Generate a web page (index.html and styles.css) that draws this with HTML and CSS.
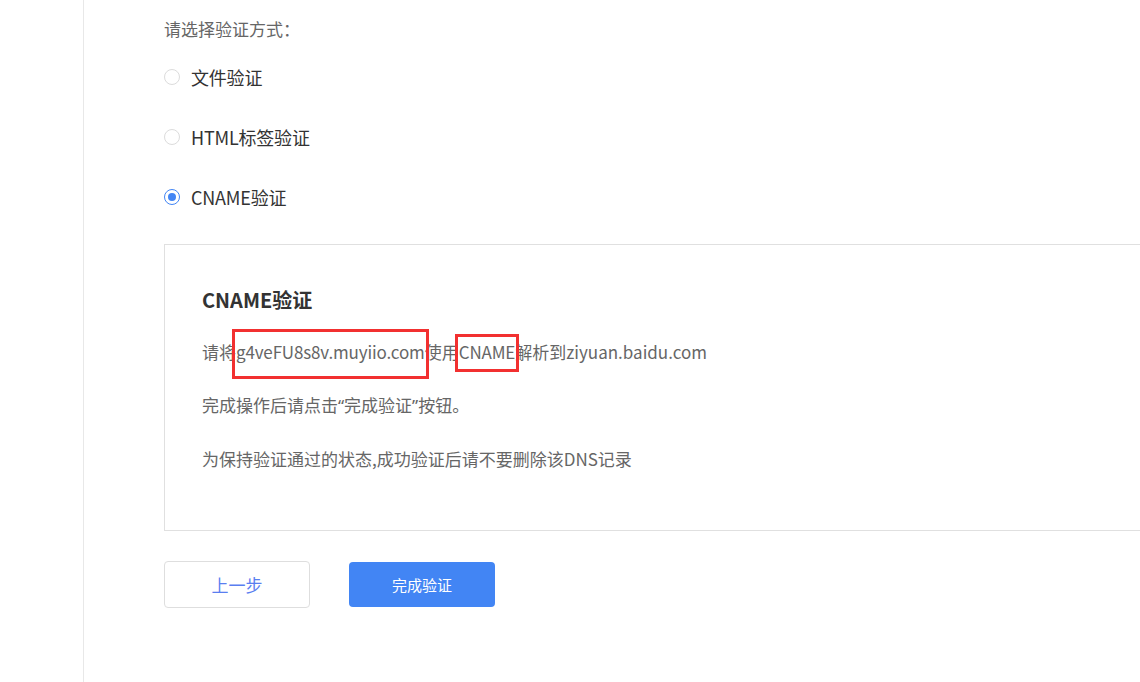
FILE: index.html
```html
<!DOCTYPE html>
<html lang="zh-CN">
<head>
<meta charset="utf-8">
<title>CNAME验证</title>
<link rel="stylesheet" href="styles.css">
</head>
<body>
<div class="page">
  <div class="main">
    <div class="prompt">请选择验证方式：</div>
    <div class="options">
      <label class="option"><span class="radio"></span><span class="opt-text">文件验证</span></label>
      <label class="option"><span class="radio"></span><span class="opt-text">HTML标签验证</span></label>
      <label class="option"><span class="radio checked"></span><span class="opt-text">CNAME验证</span></label>
    </div>
    <div class="panel">
      <div class="panel-title">CNAME验证</div>
      <p class="line">请将<span class="mark mark-a">g4veFU8s8v.muyiio.com</span>使用<span class="mark mark-b">CNAME</span>解析到ziyuan.baidu.com</p>
      <p class="line">完成操作后请点击<span class="q">“</span>完成验证<span class="q">”</span>按钮。</p>
      <p class="line">为保持验证通过的状态,成功验证后请不要删除该DNS记录</p>
    </div>
    <div class="actions">
      <button class="btn btn-default">上一步</button>
      <button class="btn btn-primary">完成验证</button>
    </div>
  </div>
</div>
</body>
</html>
```

FILE: styles.css
```css
html, body {
  margin: 0;
  padding: 0;
  background: #fff;
  overflow: hidden;
}
body {
  font-family: "Noto Sans CJK SC", "Noto Sans", sans-serif;
  color: #333;
}
.page {
  margin-left: 83px;
  border-left: 1px solid #e8e8e8;
  min-height: 682px;
  box-sizing: border-box;
}
.main {
  padding-left: 80px;
  padding-top: 19px;
}
.prompt {
  font-size: 17px;
  line-height: 20px;
  color: #666;
}
.options {
  display: flex;
  flex-direction: column;
  gap: 36px;
  margin-top: 26px;
}
.option {
  display: flex;
  align-items: center;
  height: 24px;
  font-size: 18px;
  line-height: 24px;
  color: #333;
}
.opt-text {
  letter-spacing: -0.2px;
}
.radio {
  width: 14px;
  height: 14px;
  border: 1px solid #dcdcdc;
  border-radius: 50%;
  box-sizing: content-box;
  margin-right: 11px;
  position: relative;
  flex: none;
}
.radio.checked {
  border-color: #4285f4;
}
.radio.checked::after {
  content: "";
  position: absolute;
  left: 3px;
  top: 3px;
  width: 8px;
  height: 8px;
  border-radius: 50%;
  background: #4285f4;
}
.panel {
  margin-top: 35px;
  width: 1000px;
  border: 1px solid #e0e0e0;
  padding: 43px 37px 61px;
  box-sizing: border-box;
}
.panel-title {
  font-size: 20px;
  font-weight: bold;
  line-height: 24px;
  color: #333;
}
.line {
  margin: 33px 0 0;
  font-size: 17px;
  line-height: 20px;
  color: #666;
}
.panel-title + .line {
  margin-top: 30px;
}
.q {
  font-family: "Noto Sans", sans-serif;
}
.mark {
  position: relative;
  letter-spacing: -0.15px;
}
.mark::after {
  content: "";
  position: absolute;
  border: 3px solid #f23030;
  pointer-events: none;
}
.mark-a::after {
  left: -4px;
  right: -4px;
  top: -10px;
  bottom: -15px;
}
.mark-b::after {
  left: -4px;
  right: -4px;
  top: -5px;
  bottom: -8px;
}
.actions {
  display: flex;
  gap: 39px;
  margin-top: 30px;
}
.btn {
  width: 146px;
  height: 47px;
  border-radius: 4px;
  font-family: inherit;
  cursor: pointer;
}
.btn-default {
  background: #fff;
  border: 1px solid #dedede;
  color: #5a7ef0;
  font-size: 17px;
}
.btn-primary {
  background: #4285f4;
  border: none;
  color: #fff;
  font-size: 15px;
  height: 45px;
  margin-top: 1px;
}
```
